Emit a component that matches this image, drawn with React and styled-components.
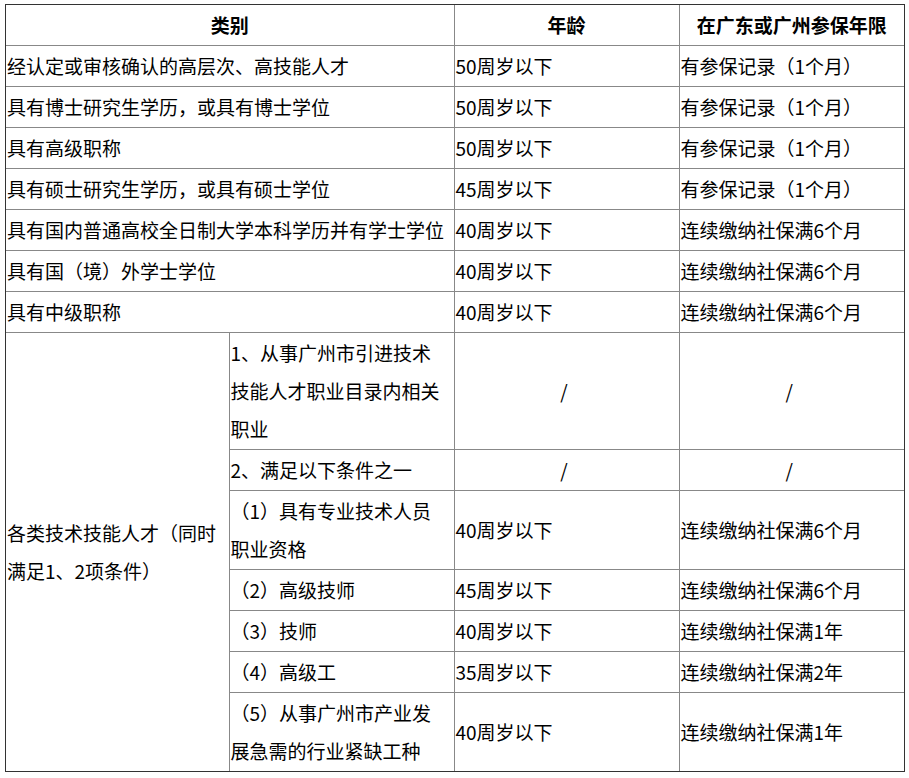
import React from "react";
import styled, { createGlobalStyle } from "styled-components";

const GlobalStyle = createGlobalStyle`
  html, body {
    margin: 0;
    padding: 0;
    background: #fff;
  }
  body {
    font-family: "Noto Sans CJK SC", "Microsoft YaHei", sans-serif;
    color: #000;
  }
`;

const basicRows = [
  ["经认定或审核确认的高层次、高技能人才", "50周岁以下", "有参保记录（1个月）"],
  ["具有博士研究生学历，或具有博士学位", "50周岁以下", "有参保记录（1个月）"],
  ["具有高级职称", "50周岁以下", "有参保记录（1个月）"],
  ["具有硕士研究生学历，或具有硕士学位", "45周岁以下", "有参保记录（1个月）"],
  ["具有国内普通高校全日制大学本科学历并有学士学位", "40周岁以下", "连续缴纳社保满6个月"],
  ["具有国（境）外学士学位", "40周岁以下", "连续缴纳社保满6个月"],
  ["具有中级职称", "40周岁以下", "连续缴纳社保满6个月"],
];

const skillRows = [
  ["1、从事广州市引进技术技能人才职业目录内相关职业", "/", "/"],
  ["2、满足以下条件之一", "/", "/"],
  ["（1）具有专业技术人员职业资格", "40周岁以下", "连续缴纳社保满6个月"],
  ["（2）高级技师", "45周岁以下", "连续缴纳社保满6个月"],
  ["（3）技师", "40周岁以下", "连续缴纳社保满1年"],
  ["（4）高级工", "35周岁以下", "连续缴纳社保满2年"],
  ["（5）从事广州市产业发展急需的行业紧缺工种", "40周岁以下", "连续缴纳社保满1年"],
];

const App = () => {
  return (
    <>
      <GlobalStyle />
      <Frame>
        <Table>
          <colgroup>
            <col style={{ width: 223 }} />
            <col style={{ width: 225 }} />
            <col style={{ width: 225 }} />
            <col style={{ width: 225 }} />
          </colgroup>
          <thead>
            <tr>
              <HeadCell colSpan={2}>类别</HeadCell>
              <HeadCell>年龄</HeadCell>
              <HeadCell>在广东或广州参保年限</HeadCell>
            </tr>
          </thead>
          <tbody>
            {basicRows.map(([kind, age, period]) => (
              <tr key={kind}>
                <Cell colSpan={2}>{kind}</Cell>
                <Cell>{age}</Cell>
                <Cell>{period}</Cell>
              </tr>
            ))}
            {skillRows.map(([kind, age, period], i) => (
              <tr key={kind}>
                {i === 0 && (
                  <Cell rowSpan={skillRows.length}>
                    各类技术技能人才（同时满足1、2项条件）
                  </Cell>
                )}
                <Cell>{kind}</Cell>
                <Cell $center={age === "/"}>{age}</Cell>
                <Cell $center={period === "/"}>{period}</Cell>
              </tr>
            ))}
          </tbody>
        </Table>
      </Frame>
    </>
  );
};

const Frame = styled.div`
  width: 898px;
  margin: 4px 0 0 5px;
  border: 1px solid #333;
`;

const Table = styled.table`
  width: 898px;
  table-layout: fixed;
  border-collapse: collapse;
  border-style: hidden;
  font-size: 19px;
  line-height: 38px;
`;

const HeadCell = styled.th`
  border: 1px solid #888;
  padding: 1px;
  font-weight: bold;
  text-align: center;
  vertical-align: middle;
`;

const Cell = styled.td`
  border: 1px solid #888;
  padding: 1px 6px 1px 1px;
  text-align: ${(p) => (p.$center ? "center" : "left")};
  vertical-align: middle;
  word-break: break-all;
`;

export default App;
